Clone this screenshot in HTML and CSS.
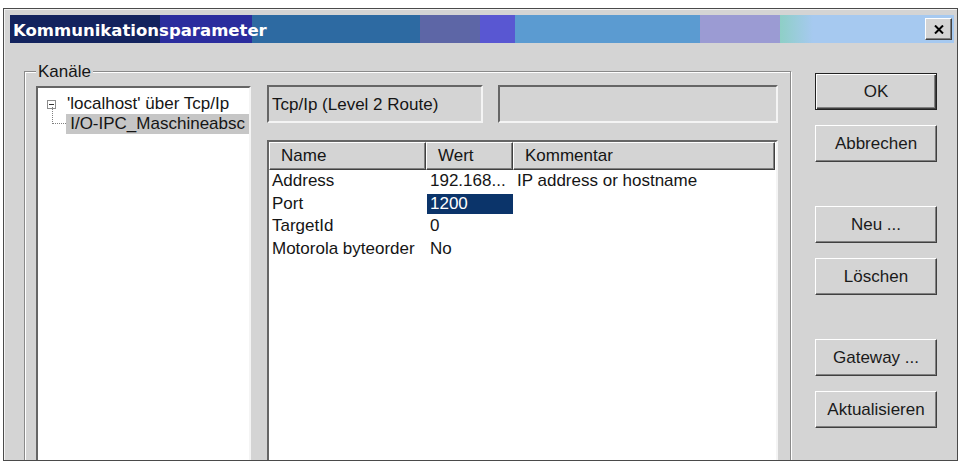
FILE: index.html
```html
<!DOCTYPE html>
<html lang="de">
  <head>
    <meta charset="UTF-8" />
    <meta name="viewport" content="width=device-width, initial-scale=1.0" />
    <title>Kommunikationsparameter</title>
    <link rel="stylesheet" href="styles.css">
  </head>
  <body>
    <div class="dialog">
      <!-- Title bar -->
      <div class="titlebar">
        <span class="title">Kommunikationsparameter</span>
        <button class="close-btn" type="button" aria-label="Schließen">
          <svg width="10" height="9" viewBox="0 0 10 9">
            <path d="M1 0.5 L9 8.5 M9 0.5 L1 8.5" stroke="#000" stroke-width="2" fill="none" />
          </svg>
        </button>
      </div>

      <div class="dialog-body">
        <!-- Channels group -->
        <fieldset class="channels">
          <legend>Kanäle</legend>

          <div class="tree-box">
            <ul class="tree">
              <li>
                <div class="tree-row">
                  <span class="toggle"></span>
                  <span class="label">'localhost' über Tcp/Ip</span>
                </div>
                <ul class="tree">
                  <li>
                    <div class="tree-row child">
                      <span class="branch"></span>
                      <span class="label selected">I/O-IPC_Maschineabsc</span>
                    </div>
                  </li>
                </ul>
              </li>
            </ul>
          </div>

          <div class="channel-detail">
            <div class="info-row">
              <div class="field field-driver">Tcp/Ip (Level 2 Route)</div>
              <div class="field field-extra"></div>
            </div>

            <div class="param-list">
              <div class="param-head">
                <div class="head-cell c-name">Name</div>
                <div class="head-cell c-value">Wert</div>
                <div class="head-cell c-note">Kommentar</div>
              </div>
              <div class="param-row">
                <div class="cell c-name">Address</div>
                <div class="cell c-value">192.168...</div>
                <div class="cell c-note">IP address or hostname</div>
              </div>
              <div class="param-row">
                <div class="cell c-name">Port</div>
                <div class="cell c-value"><span class="value-selected">1200</span></div>
                <div class="cell c-note"></div>
              </div>
              <div class="param-row">
                <div class="cell c-name">TargetId</div>
                <div class="cell c-value">0</div>
                <div class="cell c-note"></div>
              </div>
              <div class="param-row">
                <div class="cell c-name">Motorola byteorder</div>
                <div class="cell c-value">No</div>
                <div class="cell c-note"></div>
              </div>
            </div>
          </div>
        </fieldset>

        <!-- Dialog buttons -->
        <div class="actions">
          <button class="btn btn-default" type="button">OK</button>
          <button class="btn" type="button">Abbrechen</button>
          <button class="btn group-start" type="button">Neu ...</button>
          <button class="btn" type="button">Löschen</button>
          <button class="btn group-start" type="button">Gateway ...</button>
          <button class="btn" type="button">Aktualisieren</button>
        </div>
      </div>
    </div>
  </body>
</html>
```

FILE: styles.css
```css
* {
  box-sizing: border-box;
}

body {
  margin: 0;
  background: #fff;
  font-family: "Liberation Sans", Arial, sans-serif;
  font-size: 17px;
  color: #151515;
}

.dialog {
  width: 955px;
  height: 453px;
  margin: 8px 0 0 3px;
  padding: 6px 3px 0 6px;
  background: #d4d4d4;
  border: 1px solid #4a4a4a;
  box-shadow: inset 1px 1px 0 #f2f2f2;
  overflow: hidden;
}

/* Title bar */
.titlebar {
  height: 28px;
  display: flex;
  align-items: center;
  justify-content: space-between;
  padding: 0 2px 0 3px;
  background: linear-gradient(
    to right,
    #13235e 0,
    #13235e 150px,
    #2b2d9e 150px,
    #2b2d9e 242px,
    #2d6aa2 242px,
    #2d6aa2 410px,
    #5d66a6 410px,
    #5d66a6 470px,
    #5957d2 470px,
    #5957d2 505px,
    #5b9bd1 505px,
    #5b9bd1 690px,
    #9b9bd3 690px,
    #9b9bd3 770px,
    #8ecfc6 770px,
    #a6c9f0 803px,
    #a6c9f0 100%
  );
}

.title {
  color: #fff;
  font-family: "DejaVu Sans", Verdana, sans-serif;
  font-weight: bold;
  font-size: 16.5px;
  padding-top: 2px;
}

.close-btn {
  width: 27px;
  height: 22px;
  padding: 0;
  display: flex;
  align-items: center;
  justify-content: center;
  background: #d4d4d4;
  border: 1px solid;
  border-color: #fff #404040 #404040 #fff;
  box-shadow: inset -1px -1px 0 #808080;
}

.dialog-body {
  display: flex;
  align-items: flex-start;
}

/* Channels group box */
.channels {
  width: 767px;
  height: 460px;
  min-width: 0;
  margin: 19px 0 0 14px;
  padding: 5px 12px 0 11px;
  display: flex;
  align-items: flex-start;
  gap: 16px;
  border: 1px solid #8a8a8a;
  box-shadow: inset 1px 1px 0 #fff, 1px 1px 0 #fff;
}

.channels legend {
  padding: 0 2px;
  line-height: 19px;
  background: #d4d4d4;
}

.tree-box {
  width: 215px;
  height: 420px;
  padding: 6px 0 0 9px;
  background: #fff;
  border: 2px solid;
  border-color: #666 #f4f4f4 #f4f4f4 #666;
  overflow: hidden;
}

.tree {
  list-style: none;
  margin: 0;
  padding: 0;
}

.tree-row {
  height: 20px;
  display: flex;
  align-items: center;
  white-space: nowrap;
}

.toggle {
  width: 9px;
  height: 9px;
  margin-right: 7px;
  display: flex;
  align-items: center;
  justify-content: center;
  border: 1px solid #8c8c8c;
}

.toggle::after {
  content: "";
  width: 5px;
  height: 1px;
  background: #333;
}

.branch {
  align-self: flex-start;
  width: 15px;
  height: 17px;
  margin: -7px 0 0 5px;
  border-left: 1px dotted #808080;
  border-bottom: 1px dotted #808080;
}

.label {
  padding: 0 4px;
  line-height: 20px;
}

.label.selected {
  background: #c6c6c6;
}

/* Right side: driver fields and parameter list */
.channel-detail {
  width: 511px;
  display: flex;
  flex-direction: column;
}

.info-row {
  display: flex;
  gap: 15px;
  margin-top: -1px;
}

.field {
  height: 38px;
  padding: 1px 3px 0;
  display: flex;
  align-items: center;
  white-space: nowrap;
  background: #d4d4d4;
  border: 2px solid;
  border-color: #666 #f4f4f4 #f4f4f4 #666;
}

.field-driver {
  width: 216px;
}

.field-extra {
  width: 280px;
}

.param-list {
  height: 330px;
  margin-top: 17px;
  background: #fff;
  border: 2px solid;
  border-color: #666 #f4f4f4 #f4f4f4 #666;
}

.param-head {
  display: flex;
  height: 28px;
}

.head-cell {
  display: flex;
  align-items: center;
  padding-left: 11px;
  background: #d4d4d4;
  border: 1px solid;
  border-color: #fff #404040 #404040 #fff;
  box-shadow: inset -1px -1px 0 #808080;
}

.c-name {
  width: 157px;
}

.c-value {
  width: 87px;
}

.c-note {
  width: 262px;
}

.param-row {
  display: flex;
  align-items: center;
  height: 22.5px;
  white-space: nowrap;
}

.cell {
  padding-left: 4px;
}

.cell.c-name {
  padding-left: 3px;
}

.cell.c-value {
  padding-left: 1px;
}

.cell.c-value:not(:has(.value-selected)) {
  padding-left: 4px;
}

.value-selected {
  display: block;
  height: 20px;
  padding-left: 3px;
  line-height: 20px;
  background: #0b346a;
  color: #fff;
}

/* Button column */
.actions {
  display: flex;
  flex-direction: column;
  gap: 15px;
  margin: 30px 0 0 24px;
}

.btn {
  width: 122px;
  height: 37px;
  padding: 0;
  font: 17px "Liberation Sans", Arial, sans-serif;
  color: #1a1a1a;
  background: #d4d4d4;
  border: 1px solid;
  border-color: #fff #404040 #404040 #fff;
  box-shadow: inset -1px -1px 0 #808080;
}

.btn-default {
  border-color: #222;
  box-shadow: inset 1px 1px 0 #fff, inset -1px -1px 0 #404040,
    inset -2px -2px 0 #808080;
}

.group-start {
  margin-top: 29px;
}
```
